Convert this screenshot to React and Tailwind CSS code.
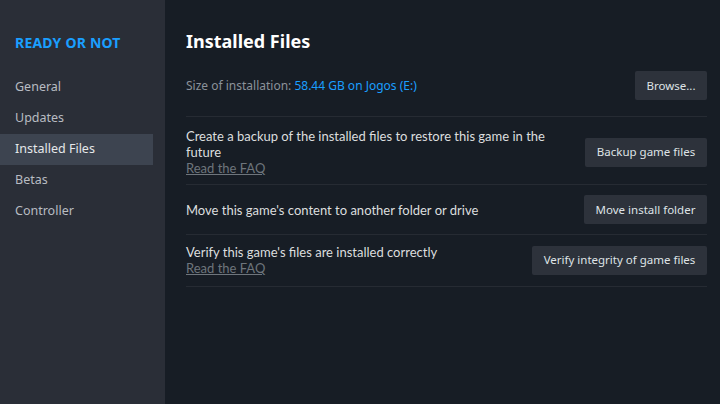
import React from "react";

const nav = ["General", "Updates", "Installed Files", "Betas", "Controller"];

function Btn({ children, w }) {
  return (
    <button className={`h-[29px] shrink-0 whitespace-nowrap rounded-[2px] bg-[#2d323b] text-[11.5px] text-[#dfe3e6] ${w}`}>
      {children}
    </button>
  );
}

const desc = "text-[13px] leading-[16px] text-[#dcdedf] [font-family:Lato,'Noto_Sans',sans-serif]";

export default function App() {
  return (
    <div
      className="flex h-[404px] w-[720px] overflow-hidden bg-[#171d25]"
      style={{ fontFamily: '"Noto Sans", "Liberation Sans", sans-serif' }}
    >
      <aside className="flex w-[165px] shrink-0 flex-col bg-[#2a2e37] pt-[32px]">
        <div className="pl-[15px] text-[14px] font-bold tracking-[0.2px] text-[#1a9fff]">READY OR NOT</div>
        <nav className="mt-[19px] flex flex-col">
          {nav.map((n) => (
            <div
              key={n}
              className={`flex h-[31px] w-[153px] items-center pl-[15px] text-[12.5px] ${
                n === "Installed Files" ? "bg-[#3d4450] text-[#e6e8ea]" : "text-[#b8bcc2]"
              }`}
            >
              {n}
            </div>
          ))}
        </nav>
      </aside>
      <main className="flex flex-1 flex-col pl-[21px] pr-[13px] pt-[29px]">
        <h1 className="text-[18px] font-bold leading-[24px] text-white">Installed Files</h1>
        <div className="mt-[18px] flex items-center justify-between border-b border-[#262b33] pb-[16px]">
          <div className="text-[12px] text-[#8b929a]">
            Size of installation: <span className="text-[#1a9fff]">58.44 GB on Jogos (E:)</span>
          </div>
          <Btn w="w-[72px]">Browse...</Btn>
        </div>
        <div className="flex items-center justify-between border-b border-[#262b33] pb-[8px] pt-[11px]">
          <div className={desc}>
            <div className="w-[375px]">Create a backup of the installed files to restore this game in the future</div>
            <div className="text-[#6e757c] underline">Read the FAQ</div>
          </div>
          <Btn w="w-[122px]">Backup game files</Btn>
        </div>
        <div className="flex items-center justify-between border-b border-[#262b33] py-[10px]">
          <div className={desc}>Move this game's content to another folder or drive</div>
          <Btn w="w-[123px]">Move install folder</Btn>
        </div>
        <div className="flex items-center justify-between border-b border-[#262b33] pb-[10px] pt-[9px]">
          <div className={desc}>
            <div>Verify this game's files are installed correctly</div>
            <div className="text-[#6e757c] underline">Read the FAQ</div>
          </div>
          <Btn w="w-[175px]">Verify integrity of game files</Btn>
        </div>
      </main>
    </div>
  );
}
